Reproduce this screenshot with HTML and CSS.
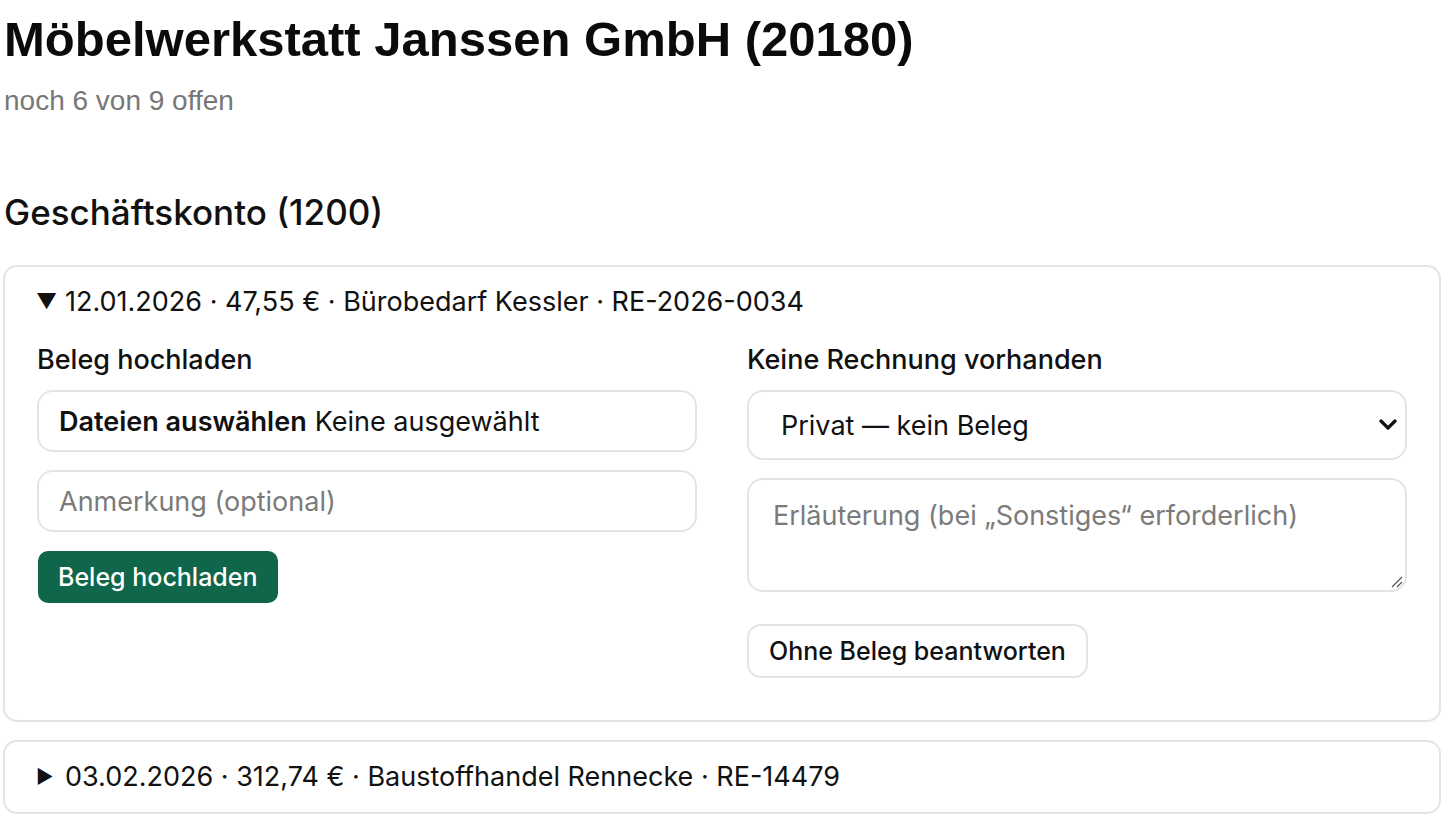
FILE: index.html
```html
<!DOCTYPE html>
<html lang="de">
<head>
<meta charset="utf-8">
<title>Möbelwerkstatt Janssen GmbH</title>
<link rel="stylesheet" href="styles.css">
</head>
<body>
<main class="page">
  <h1 class="title">Möbelwerkstatt Janssen GmbH (20180)</h1>
  <p class="subtitle">noch 6 von 9 offen</p>

  <h2 class="section">Geschäftskonto (1200)</h2>

  <details class="card" open>
    <summary class="summary"><span class="tri">▼</span>12.01.2026 · 47,55 € · Bürobedarf Kessler · RE-2026-0034</summary>
    <div class="cols">
      <div class="col">
        <div class="label">Beleg hochladen</div>
        <div class="field file"><b>Dateien auswählen</b> Keine ausgewählt</div>
        <div class="field input placeholder">Anmerkung (optional)</div>
        <div><span class="btn-primary">Beleg hochladen</span></div>
      </div>
      <div class="col">
        <div class="label">Keine Rechnung vorhanden</div>
        <div class="field select"><span>Privat — kein Beleg</span>
          <svg class="chev" width="18" height="12" viewBox="0 0 18 12"><path d="M2 2 L9 9 L16 2" fill="none" stroke="#111" stroke-width="3.2" stroke-linecap="round" stroke-linejoin="round"/></svg>
        </div>
        <div class="field textarea placeholder">Erläuterung (bei „Sonstiges“ erforderlich)
          <svg class="grip" width="14" height="14" viewBox="0 0 14 14"><path d="M13 3 L3 13 M13 8 L8 13" stroke="#555" stroke-width="1.2"/></svg>
        </div>
        <div><span class="btn-secondary">Ohne Beleg beantworten</span></div>
      </div>
    </div>
  </details>

  <div class="card closed">
    <div class="summary"><span class="tri small">▶</span>03.02.2026 · 312,74 € · Baustoffhandel Rennecke · RE-14479</div>
  </div>
</main>
</body>
</html>
```

FILE: styles.css
```css
* { box-sizing: border-box; }
html, body { margin: 0; padding: 0; background: #fff; }
body {
  font-family: Inter, "Liberation Sans", Arial, sans-serif;
  color: #111;
}
.page {
  padding: 0 3px;
}
.title {
  font-family: "Liberation Sans", Arial, sans-serif;
  font-size: 49px;
  font-weight: 700;
  line-height: 59px;
  margin: 10px 0 0 1px;
  color: #0b0b0b;
}
.subtitle {
  margin: 15px 0 0 1px;
  font-family: "Liberation Sans", Arial, sans-serif;
  font-size: 28px;
  color: #777;
  line-height: 34px;
}
.section {
  margin: 71px 0 0 1px;
  font-size: 35px;
  font-weight: 500;
  line-height: 46px;
}
.card {
  margin-top: 30px;
  border: 2px solid #e4e4e4;
  border-radius: 14px;
  padding: 17px 32px 42px;
}
.card.closed {
  margin-top: 18px;
  padding: 17px 32px 17px;
}
.summary {
  list-style: none;
  font-size: 27px;
  line-height: 36px;
  display: flex;
  align-items: center;
  cursor: pointer;
}
.summary::-webkit-details-marker { display: none; }
.tri {
  font-size: 21px;
  width: 29px;
  display: inline-block;
  margin-left: -1px;
}
.tri.small { font-size: 19px; }
.cols {
  display: grid;
  grid-template-columns: 1fr 1fr;
  column-gap: 50px;
  margin-top: 23px;
}
.col {
  display: flex;
  flex-direction: column;
}
.label {
  font-size: 27px;
  font-weight: 500;
  line-height: 34px;
  margin-bottom: 13px;
}
.field {
  border: 2px solid #e4e4e4;
  border-radius: 16px;
  font-size: 27px;
  padding: 0 20px;
  display: flex;
  align-items: center;
}
.file { height: 62px; margin-bottom: 18px; }
.file b { font-weight: 600; margin-right: 8px; }
.input { height: 62px; margin-bottom: 19px; }
.placeholder { color: #7b7b7b; }
.select {
  height: 70px;
  padding: 0 8px 0 32px;
  justify-content: space-between;
  margin-bottom: 18px;
  color: #111;
}
.textarea {
  height: 114px;
  align-items: flex-start;
  padding-top: 20px;
  padding-left: 24px;
  line-height: 32px;
  position: relative;
  margin-bottom: 32px;
}
.grip { position: absolute; right: 2px; bottom: 2px; }
.btn-primary {
  display: inline-block;
  background: #0f664a;
  color: #fff;
  font-size: 25px;
  font-weight: 500;
  line-height: 52px;
  padding: 0 20px;
  border-radius: 10px;
  margin-left: 1px;
}
.btn-secondary {
  display: inline-block;
  background: #fff;
  border: 2px solid #e4e4e4;
  color: #111;
  font-size: 25px;
  font-weight: 500;
  line-height: 50px;
  padding: 0 20px;
  border-radius: 14px;
}
```
